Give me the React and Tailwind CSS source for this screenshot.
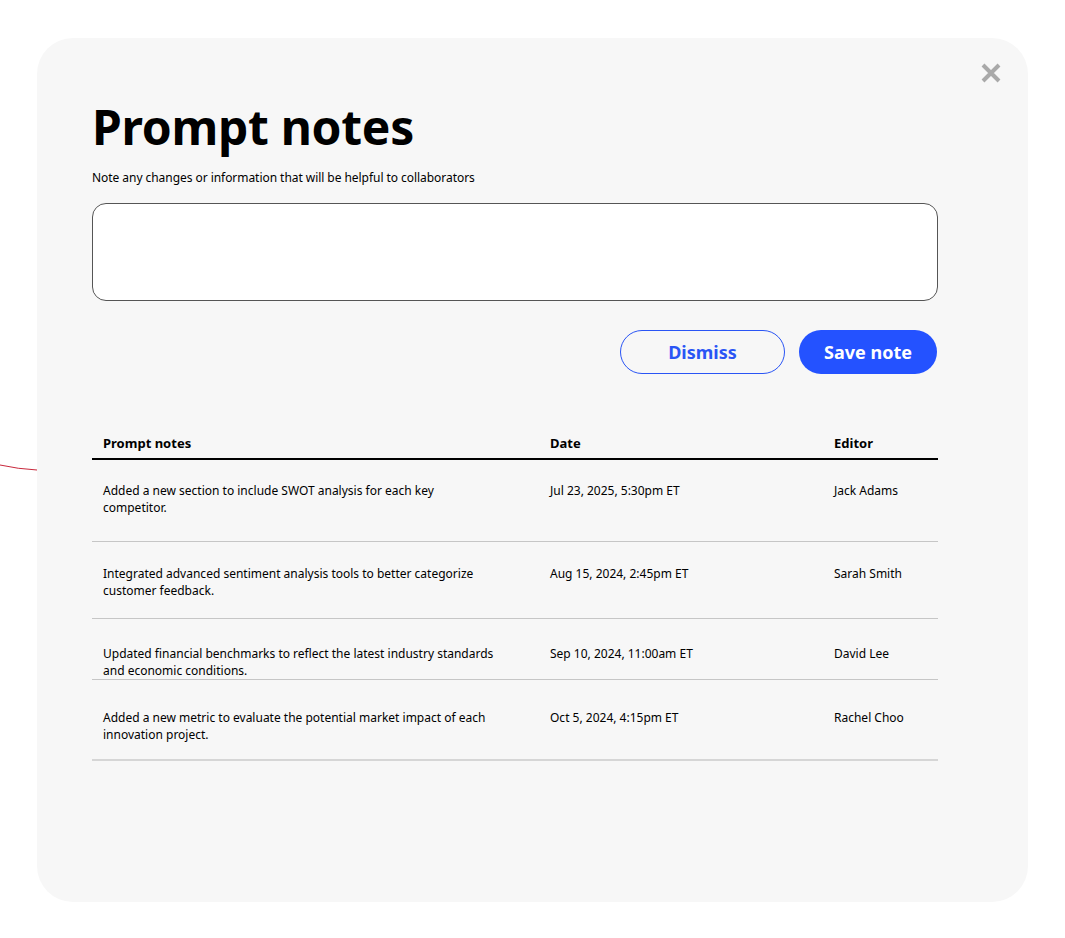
import React from 'react';

const notes = [
  {
    text: 'Added a new section to include SWOT analysis for each key competitor.',
    date: 'Jul 23, 2025, 5:30pm ET',
    editor: 'Jack Adams',
    pad: 'pt-[22px] pb-[25px] border-b border-[#c6c6c6]',
  },
  {
    text: 'Integrated advanced sentiment analysis tools to better categorize customer feedback.',
    date: 'Aug 15, 2024, 2:45pm ET',
    editor: 'Sarah Smith',
    pad: 'pt-[23px] pb-[19px] border-b border-[#c6c6c6]',
  },
  {
    text: 'Updated financial benchmarks to reflect the latest industry standards and economic conditions.',
    date: 'Sep 10, 2024, 11:00am ET',
    editor: 'David Lee',
    pad: 'pt-[26px] pb-0 border-b border-[#c6c6c6]',
  },
  {
    text: 'Added a new metric to evaluate the potential market impact of each innovation project.',
    date: 'Oct 5, 2024, 4:15pm ET',
    editor: 'Rachel Choo',
    pad: 'pt-[29px] pb-[16px] border-b-2 border-[#d6d6d6]',
  },
];

function CloseIcon() {
  return (
    <svg width="20" height="20" viewBox="0 0 20 20">
      <path d="M2 2 L18 18 M18 2 L2 18" stroke="#a9a9a9" strokeWidth="4" fill="none" />
    </svg>
  );
}

export default function App() {
  return (
    <div className="relative min-h-[938px] bg-white pl-[37px] pt-[38px] font-['Noto_Sans',sans-serif] text-black">
      {/* stray annotation line at the left edge */}
      <svg className="absolute left-0 top-[455px]" width="38" height="20" viewBox="0 0 38 20">
        <path d="M0 10 Q 18 14 37 15" stroke="#c8283c" strokeWidth="1" fill="none" />
      </svg>

      <div className="relative w-[991px] h-[864px] rounded-[36px] bg-[#f7f7f7] pl-[55px] pt-[65px]">
        <button className="absolute right-[27px] top-[25px] p-0">
          <CloseIcon />
        </button>

        <div className="w-[846px]">
          <h1 className="text-[48px] leading-[48px] font-bold tracking-[-0.3px]">Prompt notes</h1>
          <p className="mt-[19px] text-[12px] leading-[16px] tracking-[-0.05px]">
            Note any changes or information that will be helpful to collaborators
          </p>

          <div className="mt-[17px] h-[98px] rounded-[14px] border-[1.5px] border-[#555] bg-white" />

          <div className="mt-[29px] mr-[1px] flex justify-end gap-[14px]">
            <button className="h-[44px] w-[165px] rounded-full border-[1.5px] border-[#2a55f5] text-[18px] font-bold text-[#2a55f5]">
              Dismiss
            </button>
            <button className="h-[44px] w-[138px] rounded-full bg-[#2452ff] text-[18px] font-bold text-white">
              Save note
            </button>
          </div>

          <div className="mt-[60px] w-[846px]">
            <div className="grid grid-cols-[447px_284px_1fr] border-b-2 border-black pb-[6px] text-[13px] leading-[18px] font-bold">
              <div className="pl-[11px]">Prompt notes</div>
              <div className="pl-[11px]">Date</div>
              <div className="pl-[11px]">Editor</div>
            </div>

            {notes.map((n, i) => (
              <div key={i} className={`grid grid-cols-[447px_284px_1fr] text-[12px] leading-[17px] ${n.pad}`}>
                <div className="pl-[11px] pr-[42px]">{n.text}</div>
                <div className="pl-[11px]">{n.date}</div>
                <div className="pl-[11px]">{n.editor}</div>
              </div>
            ))}
          </div>
        </div>
      </div>
    </div>
  );
}
